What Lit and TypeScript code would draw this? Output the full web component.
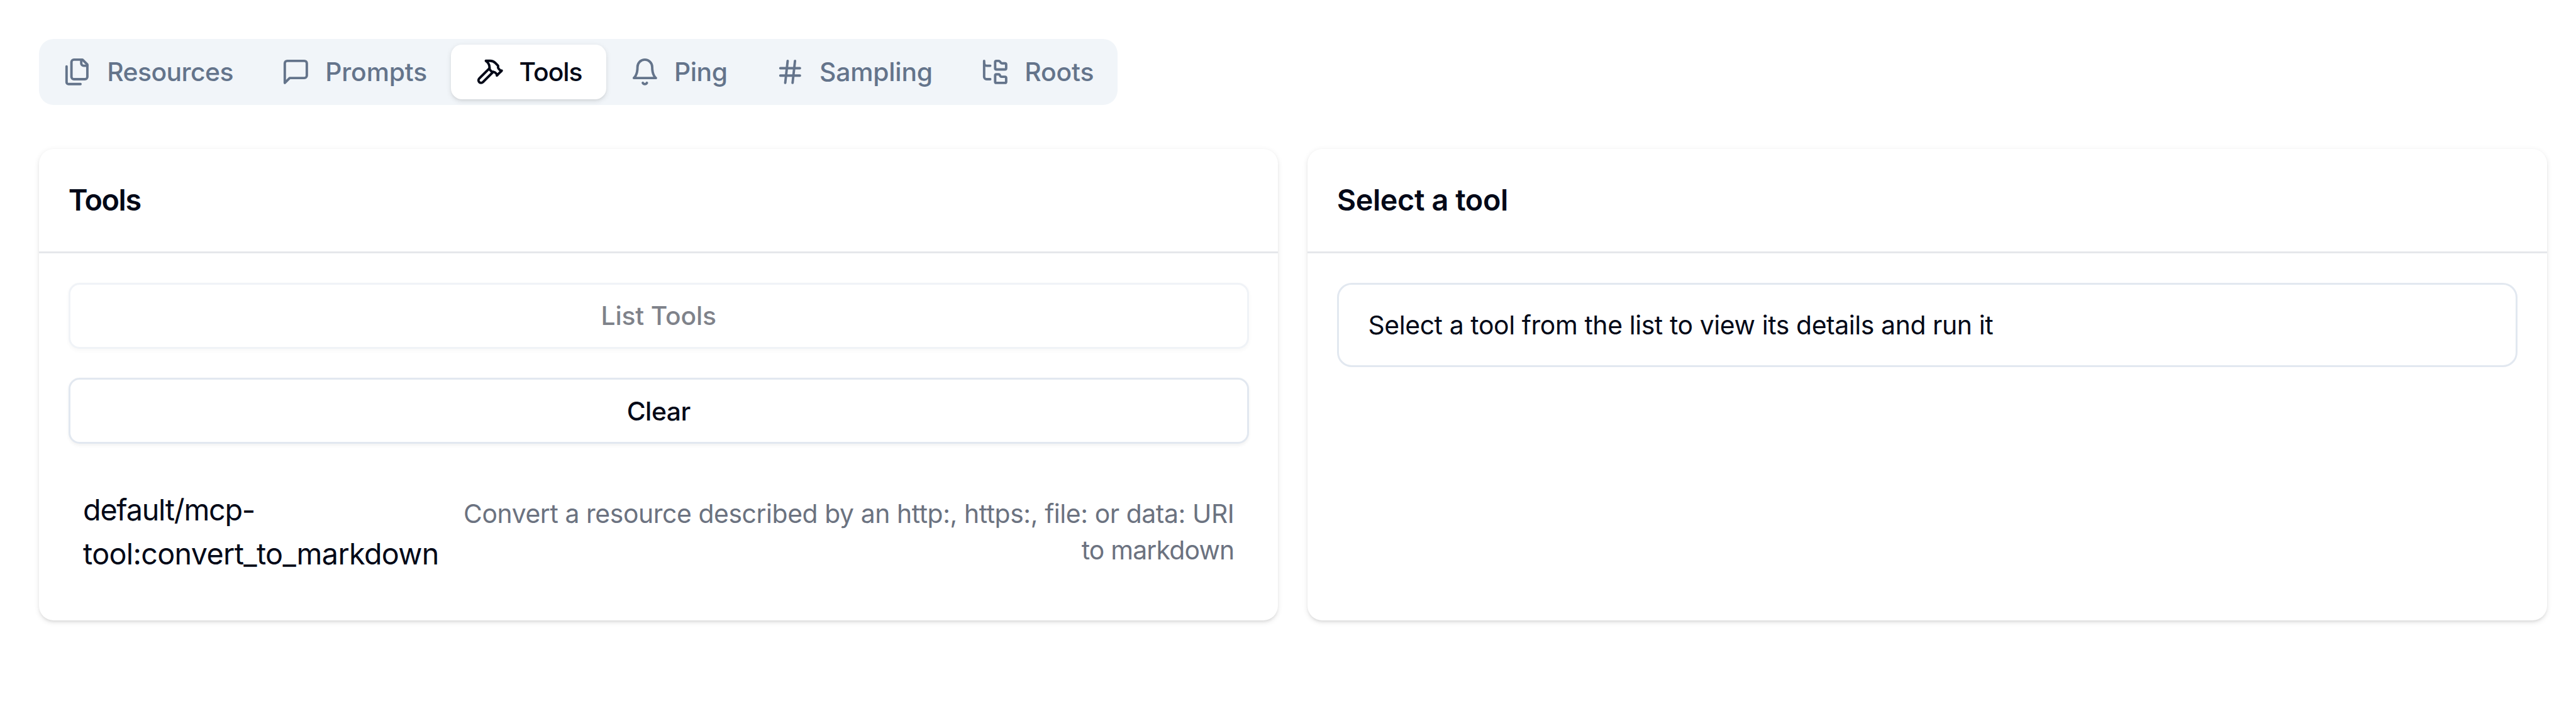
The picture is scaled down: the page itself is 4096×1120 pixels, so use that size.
import { LitElement, html, css, svg } from "lit";
import { customElement, state } from "lit/decorators.js";
import { classMap } from "lit/directives/class-map.js";
import { styleMap } from "lit/directives/style-map.js";

const icons = {
  files: svg`<path d="M20 7h-3a2 2 0 0 1-2-2V2"/><path d="M9 18a2 2 0 0 1-2-2V4a2 2 0 0 1 2-2h7l4 4v10a2 2 0 0 1-2 2Z"/><path d="M3 7.6v12.8A1.6 1.6 0 0 0 4.6 22h9.8"/>`,
  message: svg`<path d="M21 15a2 2 0 0 1-2 2H7l-4 4V5a2 2 0 0 1 2-2h14a2 2 0 0 1 2 2z"/>`,
  hammer: svg`<path d="m15 12-8.373 8.373a1 1 0 1 1-3-3L12 9"/><path d="m18 15 4-4"/><path d="m21.5 11.5-1.914-1.914A2 2 0 0 1 19 8.172V7l-2.26-2.26a6 6 0 0 0-4.202-1.756L9 2.96l.92.82A6.18 6.18 0 0 1 12 8.4V10l2 2h1.172a2 2 0 0 1 1.414.586L18.5 14.5"/>`,
  bell: svg`<path d="M6 8a6 6 0 0 1 12 0c0 7 3 9 3 9H3s3-2 3-9"/><path d="M10.3 21a1.94 1.94 0 0 0 3.4 0"/>`,
  hash: svg`<path d="M4 9h16M4 15h16M10 3 8 21M16 3l-2 18"/>`,
  tree: svg`<path d="M20 10a1 1 0 0 0 1-1V6a1 1 0 0 0-1-1h-2.5a1 1 0 0 1-.8-.4l-.9-1.2A1 1 0 0 0 15 3h-2a1 1 0 0 0-1 1v5a1 1 0 0 0 1 1Z"/><path d="M20 21a1 1 0 0 0 1-1v-3a1 1 0 0 0-1-1h-2.9a1 1 0 0 1-.88-.55l-.42-.85a1 1 0 0 0-.92-.6H13a1 1 0 0 0-1 1v5a1 1 0 0 0 1 1Z"/><path d="M3 5a2 2 0 0 0 2 2h3"/><path d="M3 3v13a2 2 0 0 0 2 2h3"/>`,
};

// tracking is the letter spacing of each label, in em
const tabs = [
  { label: "Resources", icon: icons.files, tracking: -0.0138 },
  { label: "Prompts", icon: icons.message, tracking: -0.0035 },
  { label: "Tools", icon: icons.hammer, tracking: -0.0245 },
  { label: "Ping", icon: icons.bell, tracking: -0.0103 },
  { label: "Sampling", icon: icons.hash, tracking: -0.0051 },
  { label: "Roots", icon: icons.tree, tracking: -0.0036 },
];

@customElement("app-root")
export class AppRoot extends LitElement {
  @state() private active = "Tools";

  static styles = css`
    :host {
      --u: 2.918px;
      display: block;
      box-sizing: border-box;
      height: 1120px;
      padding: 61.75px 46.5px 0 62px;
      background: #fff;
      color: #020817;
      font-family: Inter, "Liberation Sans", sans-serif;
      font-size: calc(16 * var(--u));
      line-height: calc(24 * var(--u));
      overflow: hidden;
    }
    * { box-sizing: border-box; }
    .tabs {
      display: flex;
      width: max-content;
      align-items: center;
      height: calc(36 * var(--u));
      background: #f1f5f9;
      border-radius: calc(8 * var(--u));
    }
    .tab, .button {
      display: flex;
      align-items: center;
      justify-content: center;
      font: 500 calc(14 * var(--u)) / calc(20 * var(--u)) Inter, "Liberation Sans", sans-serif;
      margin: 0;
      white-space: nowrap;
    }
    .tab {
      gap: calc(8 * var(--u));
      height: calc(30 * var(--u));
      padding: 0 calc(13.08 * var(--u));
      border: 0;
      border-radius: calc(6 * var(--u));
      background: transparent;
      color: #64748b;
    }
    .tab.active {
      background: #fff;
      color: #020817;
      box-shadow: 0 var(--u) calc(3 * var(--u)) rgb(0 0 0 / 0.1),
        0 var(--u) calc(2 * var(--u)) calc(-1 * var(--u)) rgb(0 0 0 / 0.1);
    }
    .icon {
      width: calc(16 * var(--u));
      height: calc(16 * var(--u));
      flex: none;
      fill: none;
      stroke: currentColor;
      stroke-width: 2;
      stroke-linecap: round;
      stroke-linejoin: round;
    }
    .panels {
      display: grid;
      grid-template-columns: 1fr 1fr;
      gap: calc(16 * var(--u));
      margin-top: 69.75px;
    }
    .card {
      background: #fff;
      border-radius: calc(8 * var(--u));
      box-shadow: 0 var(--u) calc(3 * var(--u)) rgb(0 0 0 / 0.1),
        0 var(--u) calc(2 * var(--u)) calc(-1 * var(--u)) rgb(0 0 0 / 0.1);
    }
    .head {
      padding: calc(16 * var(--u));
      border-bottom: 3px solid #e5e7eb;
    }
    .title {
      margin: 0;
      font-size: inherit;
      font-weight: 600;
      letter-spacing: -0.0079em;
    }
    .title.short { letter-spacing: -0.0295em; }
    .body {
      display: flex;
      flex-direction: column;
      gap: calc(16 * var(--u));
      padding: calc(16 * var(--u));
    }
    .button {
      width: 100%;
      height: calc(36 * var(--u));
      padding: 0;
      background: #fff;
      color: inherit;
      letter-spacing: -0.0124em;
      border: 3px solid #e2e8f0;
      border-radius: calc(6 * var(--u));
      box-shadow: 0 var(--u) calc(2 * var(--u)) rgb(0 0 0 / 0.05);
    }
    .button:disabled { opacity: 0.5; letter-spacing: -0.005em; }
    .item {
      display: flex;
      align-items: center;
      justify-content: space-between;
      gap: calc(6 * var(--u));
      padding: calc(8 * var(--u));
    }
    .name { width: min-content; flex: none; letter-spacing: -0.0141em; }
    .name .lead { letter-spacing: -0.0264em; }
    .desc {
      text-align: right;
      color: #6b7280;
      font-size: calc(14 * var(--u));
      line-height: calc(20 * var(--u));
      letter-spacing: -0.0101em;
    }
    .desc .tail { letter-spacing: -0.0195em; }
    .alert {
      padding: calc(12 * var(--u)) calc(16 * var(--u));
      border: 3px solid #e2e8f0;
      border-radius: calc(8 * var(--u));
      font-size: calc(14 * var(--u));
      line-height: calc(20 * var(--u));
      letter-spacing: -0.0094em;
    }
  `;

  render() {
    return html`
      <div class="tabs" role="tablist">
        ${tabs.map(
          (t) => html`<button
            class=${classMap({ tab: true, active: t.label === this.active })}
            style=${styleMap({ letterSpacing: `${t.tracking}em` })}
            role="tab"
            @click=${() => (this.active = t.label)}
          ><svg class="icon" viewBox="0 0 24 24">${t.icon}</svg><span>${t.label}</span></button>`
        )}
      </div>
      <div class="panels">
        <section class="card">
          <div class="head"><h3 class="title short">Tools</h3></div>
          <div class="body">
            <button class="button" disabled>List Tools</button>
            <button class="button">Clear</button>
            <div class="item">
              <span class="name"><span class="lead">default/mcp-</span>tool:convert_to_markdown</span>
              <span class="desc">Convert a resource described by an http:, https:, file: or data: URI <span class="tail">to markdown</span></span>
            </div>
          </div>
        </section>
        <section class="card">
          <div class="head"><h3 class="title">Select a tool</h3></div>
          <div class="body">
            <div class="alert">Select a tool from the list to view its details and run it</div>
          </div>
        </section>
      </div>
    `;
  }
}
